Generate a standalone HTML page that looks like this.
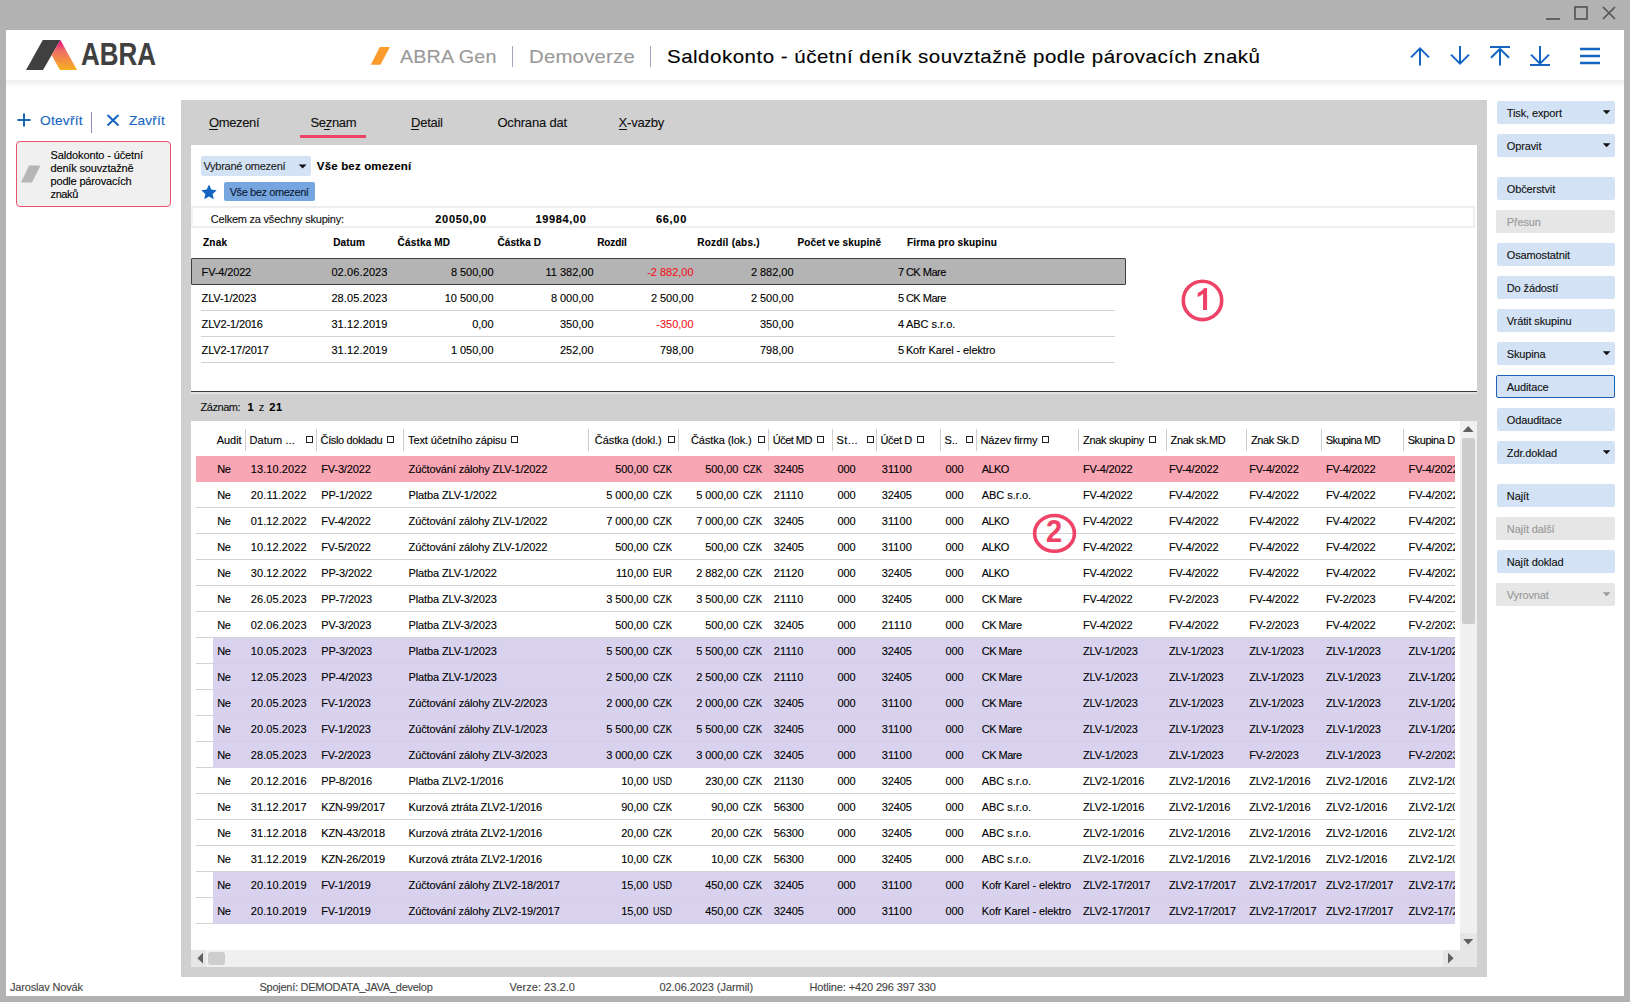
<!DOCTYPE html>
<html lang="cs"><head><meta charset="utf-8"><title>Saldokonto</title>
<style>
html,body{margin:0;padding:0}
body{width:1630px;height:1002px;overflow:hidden;background:#b2b2b2;font-family:'Liberation Sans',sans-serif;position:relative;color:#000}
#r{position:absolute;left:0;top:0;width:1630px;height:1002px;overflow:hidden}
#r div{position:absolute}
#r svg{position:absolute;overflow:visible}
.t{-webkit-text-stroke:0.12px currentColor;position:absolute;white-space:pre;font-family:'Liberation Sans',sans-serif}
.b{font-weight:700}
.s10{font-size:10px;line-height:13px}
.s11{font-size:11px;line-height:14px}
.s11_5{font-size:11.5px;line-height:15px}
.s13{font-size:13px;line-height:17px}
.s19{font-size:19px;line-height:25px}
.s31{font-size:31px;line-height:40px}
</style></head><body><div id="r">
<div style="left:6px;top:30px;width:1618px;height:966px;background:#fff;"></div>
<div style="left:6px;top:80px;width:1618px;height:8px;background:linear-gradient(#efefef,#fff);"></div>
<svg style="left:1540px;top:0" width="84" height="30"><g stroke="#555" stroke-width="1.7" fill="none"><path d="M6 19H20"/><rect x="35" y="7" width="12" height="12"/><path d="M63 7L75 19M75 7L63 19"/></g></svg>
<svg style="left:20px;top:36px" width="70" height="40"><defs><linearGradient id="lg" x1="0" y1="0" x2="0" y2="1"><stop offset="0" stop-color="#e6007e"/><stop offset="0.35" stop-color="#ee6d66"/><stop offset="1" stop-color="#f7b01f"/></linearGradient></defs><path d="M6 34L22.8 4H40.4L23 34Z" fill="#404040"/><path d="M40.4 4L57 34H40L31.6 19Z" fill="url(#lg)"/></svg>
<svg style="left:370px;top:46px" width="22" height="20"><path d="M0.8 18.8L9.8 1H19.9L10.4 18.8Z" fill="#fb9b2b"/></svg>
<div style="left:512px;top:46px;width:1px;height:21px;background:#a3a3c2;"></div>
<div style="left:650px;top:46px;width:1px;height:21px;background:#a3a3c2;"></div>
<svg style="left:1405px;top:40px" width="205" height="32"><g stroke="#1565c0" stroke-width="2" fill="none"><path d="M15 25.5V8.5M6 17.4L15 8.4L24 17.4"/><path d="M55 6V23M46 14.6L55 23.6L64 14.6"/><path d="M85 7H105M95 25.5V9M86 17.8L95 8.8L104 17.8"/><path d="M125 25H145M135 6V23M126 14.6L135 23.6L144 14.6"/><path d="M175 9H195M175 16H195M175 23H195" stroke-width="2.6"/></g></svg>
<svg style="left:16px;top:112px" width="110" height="22"><g stroke="#1565c0" stroke-width="2" fill="none"><path d="M8 1.5V14.5M1.5 8H14.5"/><path d="M91.5 3L102.5 13.5M102.5 3L91.5 13.5"/></g><path d="M75.5 0V21" stroke="#8d8dc0" stroke-width="1"/></svg>
<div style="left:16px;top:141px;width:153px;height:64px;background:#f0f0f0;border:1px solid #e9536f;border-radius:4px"></div>
<svg style="left:21px;top:165px" width="20" height="18"><path d="M0 17.5L8 0.5H19.5L11 17.5Z" fill="#b6b6b6"/></svg>
<div style="left:181px;top:100px;width:1306px;height:877px;background:#d0d0d0;"></div>
<div style="left:209px;top:128.5px;width:9px;height:1px;background:#111;"></div>
<div style="left:324px;top:128.5px;width:6px;height:1px;background:#111;"></div>
<div style="left:411px;top:128.5px;width:8px;height:1px;background:#111;"></div>
<div style="left:619px;top:128.5px;width:8px;height:1px;background:#111;"></div>
<div style="left:300px;top:135px;width:66px;height:3px;background:#ee4266;"></div>
<div style="left:191px;top:145px;width:1286px;height:246px;background:#fff;"></div>
<div style="left:191px;top:391px;width:1286px;height:1px;background:#3c3c3c;"></div>
<div style="left:191px;top:392px;width:1286px;height:2px;background:#e2e2e2;"></div>
<div style="left:191px;top:421px;width:1286px;height:546px;background:#fff;"></div>
<div style="left:1497px;top:101px;width:118px;height:23px;background:#d3e3f5;border-radius:2px"></div>
<svg style="left:1602px;top:110px" width="10" height="6"><path d="M0.8 0.3H8.4L4.6 4.3Z" fill="#111"/></svg>
<div style="left:1497px;top:134px;width:118px;height:23px;background:#d3e3f5;border-radius:2px"></div>
<svg style="left:1602px;top:143px" width="10" height="6"><path d="M0.8 0.3H8.4L4.6 4.3Z" fill="#111"/></svg>
<div style="left:1497px;top:177px;width:118px;height:23px;background:#d3e3f5;border-radius:2px"></div>
<div style="left:1496px;top:210px;width:119px;height:23px;background:#e6e6e6;border-radius:2px"></div>
<div style="left:1497px;top:243px;width:118px;height:23px;background:#d3e3f5;border-radius:2px"></div>
<div style="left:1497px;top:276px;width:118px;height:23px;background:#d3e3f5;border-radius:2px"></div>
<div style="left:1497px;top:309px;width:118px;height:23px;background:#d3e3f5;border-radius:2px"></div>
<div style="left:1497px;top:342px;width:118px;height:23px;background:#d3e3f5;border-radius:2px"></div>
<svg style="left:1602px;top:351px" width="10" height="6"><path d="M0.8 0.3H8.4L4.6 4.3Z" fill="#111"/></svg>
<div style="left:1496px;top:375px;width:117px;height:21px;background:#d3e3f5;border:1px solid #1e62b8;border-radius:2px"></div>
<div style="left:1497px;top:408px;width:118px;height:23px;background:#d3e3f5;border-radius:2px"></div>
<div style="left:1497px;top:441px;width:118px;height:23px;background:#d3e3f5;border-radius:2px"></div>
<svg style="left:1602px;top:450px" width="10" height="6"><path d="M0.8 0.3H8.4L4.6 4.3Z" fill="#111"/></svg>
<div style="left:1497px;top:484px;width:118px;height:23px;background:#d3e3f5;border-radius:2px"></div>
<div style="left:1496px;top:517px;width:119px;height:23px;background:#e6e6e6;border-radius:2px"></div>
<div style="left:1497px;top:550px;width:118px;height:23px;background:#d3e3f5;border-radius:2px"></div>
<div style="left:1496px;top:583px;width:119px;height:23px;background:#e6e6e6;border-radius:2px"></div>
<svg style="left:1602px;top:592px" width="10" height="6"><path d="M0.8 0.3H8.4L4.6 4.3Z" fill="#999"/></svg>
<div style="left:201px;top:156px;width:110px;height:20px;background:#d3e3f5;border-radius:2px"></div>
<svg style="left:298px;top:164px" width="10" height="6"><path d="M0.6 0.4H8.6L4.6 4.4Z" fill="#111"/></svg>
<svg style="left:201px;top:184px" width="16" height="16"><path d="M8 0.6L10.3 5.6L15.7 6.2L11.7 9.9L12.8 15.3L8 12.6L3.2 15.3L4.3 9.9L0.3 6.2L5.7 5.6Z" fill="#1565c0"/></svg>
<div style="left:224px;top:182px;width:91px;height:19px;background:#76a5df;border-radius:2px"></div>
<div style="left:191px;top:206px;width:1280px;height:18px;background:#fff;border:2px solid #efeeee;border-left-color:#f4f3f3"></div>
<div style="left:191px;top:258px;width:933px;height:25px;background:#b4b4b4;border:1px solid #404040;border-radius:1px"></div>
<div style="left:201px;top:310px;width:914px;height:1px;background:#d2d2d2;"></div>
<div style="left:201px;top:336px;width:914px;height:1px;background:#d2d2d2;"></div>
<div style="left:201px;top:362px;width:914px;height:1px;background:#d2d2d2;"></div>
<div style="left:306px;top:436px;width:5px;height:5px;background:transparent;border:1px solid #222"></div>
<div style="left:387px;top:436px;width:5px;height:5px;background:transparent;border:1px solid #222"></div>
<div style="left:511px;top:436px;width:5px;height:5px;background:transparent;border:1px solid #222"></div>
<div style="left:668px;top:436px;width:5px;height:5px;background:transparent;border:1px solid #222"></div>
<div style="left:758px;top:436px;width:5px;height:5px;background:transparent;border:1px solid #222"></div>
<div style="left:817.4px;top:436px;width:5px;height:5px;background:transparent;border:1px solid #222"></div>
<div style="left:866.5px;top:436px;width:5px;height:5px;background:transparent;border:1px solid #222"></div>
<div style="left:917px;top:436px;width:5px;height:5px;background:transparent;border:1px solid #222"></div>
<div style="left:966.2px;top:436px;width:5px;height:5px;background:transparent;border:1px solid #222"></div>
<div style="left:1042.3px;top:436px;width:5px;height:5px;background:transparent;border:1px solid #222"></div>
<div style="left:1149.3px;top:436px;width:5px;height:5px;background:transparent;border:1px solid #222"></div>
<div style="left:245px;top:429px;width:1px;height:22px;background:#cfcfcf;"></div>
<div style="left:316px;top:429px;width:1px;height:22px;background:#cfcfcf;"></div>
<div style="left:403px;top:429px;width:1px;height:22px;background:#cfcfcf;"></div>
<div style="left:588px;top:429px;width:1px;height:22px;background:#cfcfcf;"></div>
<div style="left:678px;top:429px;width:1px;height:22px;background:#cfcfcf;"></div>
<div style="left:768px;top:429px;width:1px;height:22px;background:#cfcfcf;"></div>
<div style="left:832px;top:429px;width:1px;height:22px;background:#cfcfcf;"></div>
<div style="left:876px;top:429px;width:1px;height:22px;background:#cfcfcf;"></div>
<div style="left:940px;top:429px;width:1px;height:22px;background:#cfcfcf;"></div>
<div style="left:976px;top:429px;width:1px;height:22px;background:#cfcfcf;"></div>
<div style="left:1078px;top:429px;width:1px;height:22px;background:#cfcfcf;"></div>
<div style="left:1166px;top:429px;width:1px;height:22px;background:#cfcfcf;"></div>
<div style="left:1246px;top:429px;width:1px;height:22px;background:#cfcfcf;"></div>
<div style="left:1321px;top:429px;width:1px;height:22px;background:#cfcfcf;"></div>
<div style="left:1403px;top:429px;width:1px;height:22px;background:#cfcfcf;"></div>
<div style="left:196px;top:455px;width:1259px;height:470px;overflow:hidden" id="g">
<div style="left:0;top:1px;width:1259px;height:26px;background:#f8a5b4"></div>
<div style="left:0;top:52px;width:1259px;height:1px;background:#d2d2d2"></div>
<div style="left:0;top:78px;width:1259px;height:1px;background:#d2d2d2"></div>
<div style="left:0;top:104px;width:1259px;height:1px;background:#d2d2d2"></div>
<div style="left:0;top:130px;width:1259px;height:1px;background:#d2d2d2"></div>
<div style="left:0;top:156px;width:1259px;height:1px;background:#d2d2d2"></div>
<div style="left:0;top:182px;width:1259px;height:1px;background:#d2d2d2"></div>
<div style="left:0;top:208px;width:17px;height:1px;background:#d2d2d2"></div>
<div style="left:17px;top:183px;width:1242px;height:26px;background:#d9d2ee"></div>
<div style="left:17px;top:208px;width:1242px;height:1px;background:#d4cfe2"></div>
<div style="left:0;top:234px;width:17px;height:1px;background:#d2d2d2"></div>
<div style="left:17px;top:209px;width:1242px;height:26px;background:#d9d2ee"></div>
<div style="left:17px;top:234px;width:1242px;height:1px;background:#d4cfe2"></div>
<div style="left:0;top:260px;width:17px;height:1px;background:#d2d2d2"></div>
<div style="left:17px;top:235px;width:1242px;height:26px;background:#d9d2ee"></div>
<div style="left:17px;top:260px;width:1242px;height:1px;background:#d4cfe2"></div>
<div style="left:0;top:286px;width:17px;height:1px;background:#d2d2d2"></div>
<div style="left:17px;top:261px;width:1242px;height:26px;background:#d9d2ee"></div>
<div style="left:17px;top:286px;width:1242px;height:1px;background:#d4cfe2"></div>
<div style="left:0;top:312px;width:17px;height:1px;background:#d2d2d2"></div>
<div style="left:17px;top:287px;width:1242px;height:26px;background:#d9d2ee"></div>
<div style="left:0;top:338px;width:1259px;height:1px;background:#d2d2d2"></div>
<div style="left:0;top:364px;width:1259px;height:1px;background:#d2d2d2"></div>
<div style="left:0;top:390px;width:1259px;height:1px;background:#d2d2d2"></div>
<div style="left:0;top:416px;width:1259px;height:1px;background:#d2d2d2"></div>
<div style="left:0;top:442px;width:17px;height:1px;background:#d2d2d2"></div>
<div style="left:17px;top:417px;width:1242px;height:26px;background:#d9d2ee"></div>
<div style="left:17px;top:442px;width:1242px;height:1px;background:#d4cfe2"></div>
<div style="left:0;top:468px;width:17px;height:1px;background:#d2d2d2"></div>
<div style="left:17px;top:443px;width:1242px;height:26px;background:#d9d2ee"></div>
</div>
<div style="left:1460px;top:421px;width:17px;height:529px;background:#f0f0f0;"></div>
<svg style="left:1462px;top:425px" width="14" height="8"><path d="M0.8 7L6.2 1L11.6 7Z" fill="#606060"/></svg>
<div style="left:1462px;top:438px;width:13px;height:186px;background:#cdcdcd;border-radius:2px"></div>
<div style="left:1460px;top:933px;width:17px;height:17px;background:#e6e6e6;"></div>
<svg style="left:1462px;top:938px" width="14" height="8"><path d="M1.2 1L6.2 6.6L11.2 1Z" fill="#606060"/></svg>
<div style="left:191px;top:950px;width:1269px;height:17px;background:#f0f0f0;"></div>
<div style="left:1460px;top:950px;width:17px;height:17px;background:#e6e6e6;"></div>
<div style="left:1443px;top:950px;width:17px;height:17px;background:#e6e6e6;"></div>
<div style="left:191px;top:950px;width:15px;height:17px;background:#e6e6e6;"></div>
<svg style="left:196px;top:952px" width="8" height="12"><path d="M7 0.8L1.4 6.2L7 11.6Z" fill="#606060"/></svg>
<svg style="left:1447px;top:952px" width="8" height="12"><path d="M1 0.8L6.6 6.2L1 11.6Z" fill="#606060"/></svg>
<div style="left:208px;top:952px;width:17px;height:13px;background:#cdcdcd;border-radius:3px"></div>
<span class="t s31 b" style="left:81px;top:35.16px;color:#404040;;transform:scaleX(0.8374);transform-origin:0 0">ABRA</span>
<span class="t s19" style="left:400.4px;top:43.82px;letter-spacing:0.112px;color:#999;;transform:scaleX(1.0400);transform-origin:0 0">ABRA Gen</span>
<span class="t s19" style="left:528.8px;top:43.82px;letter-spacing:0.212px;color:#999;;transform:scaleX(1.0700);transform-origin:0 0">Demoverze</span>
<span class="t s19" style="left:666.8px;top:43.82px;letter-spacing:0.452px;color:#000;;transform:scaleX(1.0800);transform-origin:0 0">Saldokonto - účetní deník souvztažně podle párovacích znaků</span>
<span class="t s13" style="left:39.5px;top:111.8px;letter-spacing:0.195px;color:#1565c0;;transform:scaleX(1.0600);transform-origin:0 0">Otevřít</span>
<span class="t s13" style="left:128.6px;top:111.8px;letter-spacing:0.175px;color:#1565c0;;transform:scaleX(1.0500);transform-origin:0 0">Zavřít</span>
<span class="t s11" style="left:50.5px;top:147.99px;letter-spacing:-0.121px">Saldokonto - účetní</span>
<span class="t s11" style="left:50.5px;top:160.89px;letter-spacing:-0.164px">deník souvztažně</span>
<span class="t s11" style="left:50.5px;top:173.79px;letter-spacing:-0.174px">podle párovacích</span>
<span class="t s11" style="left:50.5px;top:186.69px;letter-spacing:-0.372px">znaků</span>
<span class="t s13" style="left:208.9px;top:114.0px;letter-spacing:-0.336px;color:#111">Omezení</span>
<span class="t s13" style="left:310.5px;top:114.0px;letter-spacing:-0.334px;color:#111">Seznam</span>
<span class="t s13" style="left:411.1px;top:114.0px;letter-spacing:-0.275px;color:#111">Detail</span>
<span class="t s13" style="left:497.4px;top:114.0px;letter-spacing:-0.177px;color:#111">Ochrana dat</span>
<span class="t s13" style="left:618.6px;top:114.0px;letter-spacing:-0.224px;color:#111">X-vazby</span>
<span class="t s11" style="left:1506.8px;top:105.99px;letter-spacing:-0.118px;color:#111">Tisk, export</span>
<span class="t s11" style="left:1506.8px;top:138.99px;letter-spacing:-0.127px;color:#111">Opravit</span>
<span class="t s11" style="left:1506.8px;top:181.99px;letter-spacing:-0.124px;color:#111">Občerstvit</span>
<span class="t s11" style="left:1506.8px;top:214.99px;letter-spacing:-0.145px;color:#999">Přesun</span>
<span class="t s11" style="left:1506.8px;top:247.99px;letter-spacing:-0.135px;color:#111">Osamostatnit</span>
<span class="t s11" style="left:1506.8px;top:280.99px;letter-spacing:-0.131px;color:#111">Do žádostí</span>
<span class="t s11" style="left:1506.8px;top:313.99px;letter-spacing:-0.118px;color:#111">Vrátit skupinu</span>
<span class="t s11" style="left:1506.8px;top:346.99px;letter-spacing:-0.142px;color:#111">Skupina</span>
<span class="t s11" style="left:1506.8px;top:379.99px;letter-spacing:-0.134px;color:#111">Auditace</span>
<span class="t s11" style="left:1506.8px;top:412.99px;letter-spacing:-0.141px;color:#111">Odauditace</span>
<span class="t s11" style="left:1506.8px;top:445.99px;letter-spacing:-0.128px;color:#111">Zdr.doklad</span>
<span class="t s11" style="left:1506.8px;top:488.99px;letter-spacing:-0.113px;color:#111">Najít</span>
<span class="t s11" style="left:1506.8px;top:521.99px;letter-spacing:-0.111px;color:#999">Najít další</span>
<span class="t s11" style="left:1506.8px;top:554.99px;letter-spacing:-0.121px;color:#111">Najít doklad</span>
<span class="t s11" style="left:1506.8px;top:587.99px;letter-spacing:-0.134px;color:#999">Vyrovnat</span>
<span class="t s11" style="left:10px;top:979.89px;letter-spacing:-0.172px;color:#444">Jaroslav Novák</span>
<span class="t s11" style="left:259.5px;top:979.89px;letter-spacing:-0.259px;color:#444">Spojení: DEMODATA_JAVA_develop</span>
<span class="t s11" style="left:509.5px;top:979.89px;letter-spacing:0.052px;color:#444">Verze: 23.2.0</span>
<span class="t s11" style="left:659.5px;top:979.89px;letter-spacing:-0.067px;color:#444">02.06.2023 (Jarmil)</span>
<span class="t s11" style="left:809.5px;top:979.89px;letter-spacing:-0.129px;color:#444">Hotline: +420 296 397 330</span>
<span class="t s11" style="left:203.4px;top:159.19px;letter-spacing:-0.254px;color:#222">Vybrané omezení</span>
<span class="t s11_5 b" style="left:316.8px;top:158.52px;letter-spacing:0.17px">Vše bez omezení</span>
<span class="t s11" style="left:229.7px;top:184.99px;letter-spacing:-0.413px;color:#0b1a33">Vše bez omezení</span>
<span class="t s11" style="left:210.8px;top:211.99px;letter-spacing:-0.222px;color:#111">Celkem za všechny skupiny:</span>
<span class="t s11 b" style="left:435.3px;top:211.99px;letter-spacing:0.689px">20050,00</span>
<span class="t s11 b" style="left:535.4px;top:211.99px;letter-spacing:0.664px">19984,00</span>
<span class="t s11 b" style="left:656px;top:211.99px;letter-spacing:0.694px">66,00</span>
<span class="t s10 b" style="left:202.9px;top:236.34px;letter-spacing:0.289px">Znak</span>
<span class="t s10 b" style="left:333.2px;top:236.34px;letter-spacing:0.135px">Datum</span>
<span class="t s10 b" style="left:397.6px;top:236.34px;letter-spacing:0.162px">Částka MD</span>
<span class="t s10 b" style="left:497.4px;top:236.34px;letter-spacing:0.123px">Částka D</span>
<span class="t s10 b" style="left:597.2px;top:236.34px;letter-spacing:-0.1px">Rozdíl</span>
<span class="t s10 b" style="left:697.2px;top:236.34px;letter-spacing:0.242px">Rozdíl (abs.)</span>
<span class="t s10 b" style="left:797.5px;top:236.34px;letter-spacing:0.131px">Počet ve skupině</span>
<span class="t s10 b" style="left:907.1px;top:236.34px;letter-spacing:0.163px">Firma pro skupinu</span>
<span class="t s11" style="left:201.6px;top:264.99px;letter-spacing:-0.141px">FV-4/2022</span>
<span class="t s11" style="left:331.4px;top:264.99px;letter-spacing:0.114px">02.06.2023</span>
<span class="t s11" style="right:1136.53px;top:264.99px;letter-spacing:-0.027px">8 500,00</span>
<span class="t s11" style="right:1036.53px;top:264.99px;letter-spacing:-0.027px">11 382,00</span>
<span class="t s11" style="right:936.53px;top:264.99px;letter-spacing:-0.026px;color:#f0141e">-2 882,00</span>
<span class="t s11" style="right:836.53px;top:264.99px;letter-spacing:-0.027px">2 882,00</span>
<span class="t s11" style="right:725.95px;top:264.99px;letter-spacing:-0.153px">7</span>
<span class="t s11" style="left:905.9px;top:264.99px;letter-spacing:-0.501px">CK Mare</span>
<span class="t s11" style="left:201.6px;top:290.99px;letter-spacing:-0.14px">ZLV-1/2023</span>
<span class="t s11" style="left:331.4px;top:290.99px;letter-spacing:0.114px">28.05.2023</span>
<span class="t s11" style="right:1136.53px;top:290.99px;letter-spacing:-0.027px">10 500,00</span>
<span class="t s11" style="right:1036.53px;top:290.99px;letter-spacing:-0.027px">8 000,00</span>
<span class="t s11" style="right:936.53px;top:290.99px;letter-spacing:-0.027px">2 500,00</span>
<span class="t s11" style="right:836.53px;top:290.99px;letter-spacing:-0.027px">2 500,00</span>
<span class="t s11" style="right:725.95px;top:290.99px;letter-spacing:-0.153px">5</span>
<span class="t s11" style="left:905.9px;top:290.99px;letter-spacing:-0.501px">CK Mare</span>
<span class="t s11" style="left:201.6px;top:316.99px;letter-spacing:-0.143px">ZLV2-1/2016</span>
<span class="t s11" style="left:331.4px;top:316.99px;letter-spacing:0.114px">31.12.2019</span>
<span class="t s11" style="right:1136.53px;top:316.99px;letter-spacing:-0.027px">0,00</span>
<span class="t s11" style="right:1036.53px;top:316.99px;letter-spacing:-0.028px">350,00</span>
<span class="t s11" style="right:936.53px;top:316.99px;letter-spacing:-0.027px;color:#f0141e">-350,00</span>
<span class="t s11" style="right:836.53px;top:316.99px;letter-spacing:-0.028px">350,00</span>
<span class="t s11" style="right:725.95px;top:316.99px;letter-spacing:-0.153px">4</span>
<span class="t s11" style="left:905.9px;top:316.99px;letter-spacing:-0.013px">ABC s.r.o.</span>
<span class="t s11" style="left:201.6px;top:342.99px;letter-spacing:-0.144px">ZLV2-17/2017</span>
<span class="t s11" style="left:331.4px;top:342.99px;letter-spacing:0.114px">31.12.2019</span>
<span class="t s11" style="right:1136.53px;top:342.99px;letter-spacing:-0.027px">1 050,00</span>
<span class="t s11" style="right:1036.53px;top:342.99px;letter-spacing:-0.028px">252,00</span>
<span class="t s11" style="right:936.53px;top:342.99px;letter-spacing:-0.028px">798,00</span>
<span class="t s11" style="right:836.53px;top:342.99px;letter-spacing:-0.028px">798,00</span>
<span class="t s11" style="right:725.95px;top:342.99px;letter-spacing:-0.153px">5</span>
<span class="t s11" style="left:905.9px;top:342.99px;letter-spacing:-0.115px">Kofr Karel - elektro</span>
<span class="t s11" style="left:200.6px;top:399.89px;letter-spacing:-0.471px;color:#111">Záznam:</span>
<span class="t s11 b" style="left:247.6px;top:399.89px;letter-spacing:0.613px">1</span>
<span class="t s11" style="left:258.8px;top:399.89px;letter-spacing:-0.138px;color:#111">z</span>
<span class="t s11 b" style="left:269.3px;top:399.89px;letter-spacing:0.475px">21</span>
<span class="t s11" style="left:216.8px;top:432.89px;letter-spacing:-0.076px;color:#000">Audit</span>
<span class="t s11" style="left:249.4px;top:432.89px;letter-spacing:0.097px;color:#000">Datum ...</span>
<span class="t s11" style="left:320.6px;top:432.89px;letter-spacing:-0.381px;color:#000">Číslo dokladu</span>
<span class="t s11" style="left:408px;top:432.89px;letter-spacing:-0.09px;color:#000">Text účetního zápisu</span>
<span class="t s11" style="left:594.8px;top:432.89px;letter-spacing:-0.076px;color:#000">Částka (dokl.)</span>
<span class="t s11" style="left:691px;top:432.89px;letter-spacing:-0.081px;color:#000">Částka (lok.)</span>
<span class="t s11" style="left:772.8px;top:432.89px;letter-spacing:-0.54px;color:#000">Účet MD</span>
<span class="t s11" style="left:836.6px;top:432.89px;letter-spacing:0.367px;color:#000">St...</span>
<span class="t s11" style="left:880.6px;top:432.89px;letter-spacing:-0.421px;color:#000">Účet D</span>
<span class="t s11" style="left:944.4px;top:432.89px;letter-spacing:0.016px;color:#000">S..</span>
<span class="t s11" style="left:980.4px;top:432.89px;letter-spacing:-0.097px;color:#000">Název firmy</span>
<span class="t s11" style="left:1083px;top:432.89px;letter-spacing:-0.318px;color:#000">Znak skupiny</span>
<span class="t s11" style="left:1170.6px;top:432.89px;letter-spacing:-0.399px;color:#000">Znak sk.MD</span>
<span class="t s11" style="left:1250.9px;top:432.89px;letter-spacing:-0.395px;color:#000">Znak Sk.D</span>
<span class="t s11" style="left:1325.7px;top:432.89px;letter-spacing:-0.542px;color:#000">Skupina MD</span>
<span class="t s11" style="left:217.2px;top:461.89px;letter-spacing:-0.431px">Ne</span>
<span class="t s11" style="left:250.8px;top:461.89px;letter-spacing:0.074px">13.10.2022</span>
<span class="t s11" style="left:321.2px;top:461.89px;letter-spacing:-0.141px">FV-3/2022</span>
<span class="t s11" style="left:408.6px;top:461.89px;letter-spacing:-0.132px">Zúčtování zálohy ZLV-1/2022</span>
<span class="t s11" style="left:652.5px;top:461.89px;;transform:scaleX(0.8636);transform-origin:0 0">CZK</span>
<span class="t s11" style="right:981.81px;top:461.89px;letter-spacing:-0.112px">500,00</span>
<span class="t s11" style="left:742.5px;top:461.89px;;transform:scaleX(0.8636);transform-origin:0 0">CZK</span>
<span class="t s11" style="right:891.81px;top:461.89px;letter-spacing:-0.112px">500,00</span>
<span class="t s11" style="left:773.7px;top:461.89px;letter-spacing:-0.119px">32405</span>
<span class="t s11" style="left:837.6px;top:461.89px;letter-spacing:-0.12px">000</span>
<span class="t s11" style="left:881.8px;top:461.89px;letter-spacing:0.044px">31100</span>
<span class="t s11" style="left:945.6px;top:461.89px;letter-spacing:-0.12px">000</span>
<span class="t s11" style="left:981.7px;top:461.89px;letter-spacing:-0.54px">ALKO</span>
<span class="t s11" style="left:1083px;top:461.89px;letter-spacing:-0.141px">FV-4/2022</span>
<span class="t s11" style="left:1168.9px;top:461.89px;letter-spacing:-0.141px">FV-4/2022</span>
<span class="t s11" style="left:1249.2px;top:461.89px;letter-spacing:-0.141px">FV-4/2022</span>
<span class="t s11" style="left:1326px;top:461.89px;letter-spacing:-0.141px">FV-4/2022</span>
<span class="t s11" style="left:217.2px;top:487.89px;letter-spacing:-0.431px">Ne</span>
<span class="t s11" style="left:250.8px;top:487.89px;letter-spacing:0.155px">20.11.2022</span>
<span class="t s11" style="left:321.2px;top:487.89px;letter-spacing:-0.144px">PP-1/2022</span>
<span class="t s11" style="left:408.6px;top:487.89px;letter-spacing:-0.133px">Platba ZLV-1/2022</span>
<span class="t s11" style="left:652.5px;top:487.89px;;transform:scaleX(0.8636);transform-origin:0 0">CZK</span>
<span class="t s11" style="right:981.81px;top:487.89px;letter-spacing:-0.107px">5 000,00</span>
<span class="t s11" style="left:742.5px;top:487.89px;;transform:scaleX(0.8636);transform-origin:0 0">CZK</span>
<span class="t s11" style="right:891.81px;top:487.89px;letter-spacing:-0.107px">5 000,00</span>
<span class="t s11" style="left:773.7px;top:487.89px;letter-spacing:0.206px">21110</span>
<span class="t s11" style="left:837.6px;top:487.89px;letter-spacing:-0.12px">000</span>
<span class="t s11" style="left:881.8px;top:487.89px;letter-spacing:-0.119px">32405</span>
<span class="t s11" style="left:945.6px;top:487.89px;letter-spacing:-0.12px">000</span>
<span class="t s11" style="left:981.7px;top:487.89px;letter-spacing:-0.013px">ABC s.r.o.</span>
<span class="t s11" style="left:1083px;top:487.89px;letter-spacing:-0.141px">FV-4/2022</span>
<span class="t s11" style="left:1168.9px;top:487.89px;letter-spacing:-0.141px">FV-4/2022</span>
<span class="t s11" style="left:1249.2px;top:487.89px;letter-spacing:-0.141px">FV-4/2022</span>
<span class="t s11" style="left:1326px;top:487.89px;letter-spacing:-0.141px">FV-4/2022</span>
<span class="t s11" style="left:217.2px;top:513.89px;letter-spacing:-0.431px">Ne</span>
<span class="t s11" style="left:250.8px;top:513.89px;letter-spacing:0.074px">01.12.2022</span>
<span class="t s11" style="left:321.2px;top:513.89px;letter-spacing:-0.141px">FV-4/2022</span>
<span class="t s11" style="left:408.6px;top:513.89px;letter-spacing:-0.132px">Zúčtování zálohy ZLV-1/2022</span>
<span class="t s11" style="left:652.5px;top:513.89px;;transform:scaleX(0.8636);transform-origin:0 0">CZK</span>
<span class="t s11" style="right:981.81px;top:513.89px;letter-spacing:-0.107px">7 000,00</span>
<span class="t s11" style="left:742.5px;top:513.89px;;transform:scaleX(0.8636);transform-origin:0 0">CZK</span>
<span class="t s11" style="right:891.81px;top:513.89px;letter-spacing:-0.107px">7 000,00</span>
<span class="t s11" style="left:773.7px;top:513.89px;letter-spacing:-0.119px">32405</span>
<span class="t s11" style="left:837.6px;top:513.89px;letter-spacing:-0.12px">000</span>
<span class="t s11" style="left:881.8px;top:513.89px;letter-spacing:0.044px">31100</span>
<span class="t s11" style="left:945.6px;top:513.89px;letter-spacing:-0.12px">000</span>
<span class="t s11" style="left:981.7px;top:513.89px;letter-spacing:-0.54px">ALKO</span>
<span class="t s11" style="left:1083px;top:513.89px;letter-spacing:-0.141px">FV-4/2022</span>
<span class="t s11" style="left:1168.9px;top:513.89px;letter-spacing:-0.141px">FV-4/2022</span>
<span class="t s11" style="left:1249.2px;top:513.89px;letter-spacing:-0.141px">FV-4/2022</span>
<span class="t s11" style="left:1326px;top:513.89px;letter-spacing:-0.141px">FV-4/2022</span>
<span class="t s11" style="left:217.2px;top:539.89px;letter-spacing:-0.431px">Ne</span>
<span class="t s11" style="left:250.8px;top:539.89px;letter-spacing:0.074px">10.12.2022</span>
<span class="t s11" style="left:321.2px;top:539.89px;letter-spacing:-0.141px">FV-5/2022</span>
<span class="t s11" style="left:408.6px;top:539.89px;letter-spacing:-0.132px">Zúčtování zálohy ZLV-1/2022</span>
<span class="t s11" style="left:652.5px;top:539.89px;;transform:scaleX(0.8636);transform-origin:0 0">CZK</span>
<span class="t s11" style="right:981.81px;top:539.89px;letter-spacing:-0.112px">500,00</span>
<span class="t s11" style="left:742.5px;top:539.89px;;transform:scaleX(0.8636);transform-origin:0 0">CZK</span>
<span class="t s11" style="right:891.81px;top:539.89px;letter-spacing:-0.112px">500,00</span>
<span class="t s11" style="left:773.7px;top:539.89px;letter-spacing:-0.119px">32405</span>
<span class="t s11" style="left:837.6px;top:539.89px;letter-spacing:-0.12px">000</span>
<span class="t s11" style="left:881.8px;top:539.89px;letter-spacing:0.044px">31100</span>
<span class="t s11" style="left:945.6px;top:539.89px;letter-spacing:-0.12px">000</span>
<span class="t s11" style="left:981.7px;top:539.89px;letter-spacing:-0.54px">ALKO</span>
<span class="t s11" style="left:1083px;top:539.89px;letter-spacing:-0.141px">FV-4/2022</span>
<span class="t s11" style="left:1168.9px;top:539.89px;letter-spacing:-0.141px">FV-4/2022</span>
<span class="t s11" style="left:1249.2px;top:539.89px;letter-spacing:-0.141px">FV-4/2022</span>
<span class="t s11" style="left:1326px;top:539.89px;letter-spacing:-0.141px">FV-4/2022</span>
<span class="t s11" style="left:217.2px;top:565.89px;letter-spacing:-0.431px">Ne</span>
<span class="t s11" style="left:250.8px;top:565.89px;letter-spacing:0.074px">30.12.2022</span>
<span class="t s11" style="left:321.2px;top:565.89px;letter-spacing:-0.144px">PP-3/2022</span>
<span class="t s11" style="left:408.6px;top:565.89px;letter-spacing:-0.133px">Platba ZLV-1/2022</span>
<span class="t s11" style="left:652.5px;top:565.89px;;transform:scaleX(0.8178);transform-origin:0 0">EUR</span>
<span class="t s11" style="right:981.81px;top:565.89px;letter-spacing:-0.109px">110,00</span>
<span class="t s11" style="left:742.5px;top:565.89px;;transform:scaleX(0.8636);transform-origin:0 0">CZK</span>
<span class="t s11" style="right:891.81px;top:565.89px;letter-spacing:-0.107px">2 882,00</span>
<span class="t s11" style="left:773.7px;top:565.89px;letter-spacing:0.044px">21120</span>
<span class="t s11" style="left:837.6px;top:565.89px;letter-spacing:-0.12px">000</span>
<span class="t s11" style="left:881.8px;top:565.89px;letter-spacing:-0.119px">32405</span>
<span class="t s11" style="left:945.6px;top:565.89px;letter-spacing:-0.12px">000</span>
<span class="t s11" style="left:981.7px;top:565.89px;letter-spacing:-0.54px">ALKO</span>
<span class="t s11" style="left:1083px;top:565.89px;letter-spacing:-0.141px">FV-4/2022</span>
<span class="t s11" style="left:1168.9px;top:565.89px;letter-spacing:-0.141px">FV-4/2022</span>
<span class="t s11" style="left:1249.2px;top:565.89px;letter-spacing:-0.141px">FV-4/2022</span>
<span class="t s11" style="left:1326px;top:565.89px;letter-spacing:-0.141px">FV-4/2022</span>
<span class="t s11" style="left:217.2px;top:591.89px;letter-spacing:-0.431px">Ne</span>
<span class="t s11" style="left:250.8px;top:591.89px;letter-spacing:0.074px">26.05.2023</span>
<span class="t s11" style="left:321.2px;top:591.89px;letter-spacing:-0.144px">PP-7/2023</span>
<span class="t s11" style="left:408.6px;top:591.89px;letter-spacing:-0.133px">Platba ZLV-3/2023</span>
<span class="t s11" style="left:652.5px;top:591.89px;;transform:scaleX(0.8636);transform-origin:0 0">CZK</span>
<span class="t s11" style="right:981.81px;top:591.89px;letter-spacing:-0.107px">3 500,00</span>
<span class="t s11" style="left:742.5px;top:591.89px;;transform:scaleX(0.8636);transform-origin:0 0">CZK</span>
<span class="t s11" style="right:891.81px;top:591.89px;letter-spacing:-0.107px">3 500,00</span>
<span class="t s11" style="left:773.7px;top:591.89px;letter-spacing:0.206px">21110</span>
<span class="t s11" style="left:837.6px;top:591.89px;letter-spacing:-0.12px">000</span>
<span class="t s11" style="left:881.8px;top:591.89px;letter-spacing:-0.119px">32405</span>
<span class="t s11" style="left:945.6px;top:591.89px;letter-spacing:-0.12px">000</span>
<span class="t s11" style="left:981.7px;top:591.89px;letter-spacing:-0.501px">CK Mare</span>
<span class="t s11" style="left:1083px;top:591.89px;letter-spacing:-0.141px">FV-4/2022</span>
<span class="t s11" style="left:1168.9px;top:591.89px;letter-spacing:-0.141px">FV-2/2023</span>
<span class="t s11" style="left:1249.2px;top:591.89px;letter-spacing:-0.141px">FV-4/2022</span>
<span class="t s11" style="left:1326px;top:591.89px;letter-spacing:-0.141px">FV-2/2023</span>
<span class="t s11" style="left:217.2px;top:617.89px;letter-spacing:-0.431px">Ne</span>
<span class="t s11" style="left:250.8px;top:617.89px;letter-spacing:0.074px">02.06.2023</span>
<span class="t s11" style="left:321.2px;top:617.89px;letter-spacing:-0.143px">PV-3/2023</span>
<span class="t s11" style="left:408.6px;top:617.89px;letter-spacing:-0.133px">Platba ZLV-3/2023</span>
<span class="t s11" style="left:652.5px;top:617.89px;;transform:scaleX(0.8636);transform-origin:0 0">CZK</span>
<span class="t s11" style="right:981.81px;top:617.89px;letter-spacing:-0.112px">500,00</span>
<span class="t s11" style="left:742.5px;top:617.89px;;transform:scaleX(0.8636);transform-origin:0 0">CZK</span>
<span class="t s11" style="right:891.81px;top:617.89px;letter-spacing:-0.112px">500,00</span>
<span class="t s11" style="left:773.7px;top:617.89px;letter-spacing:-0.119px">32405</span>
<span class="t s11" style="left:837.6px;top:617.89px;letter-spacing:-0.12px">000</span>
<span class="t s11" style="left:881.8px;top:617.89px;letter-spacing:0.206px">21110</span>
<span class="t s11" style="left:945.6px;top:617.89px;letter-spacing:-0.12px">000</span>
<span class="t s11" style="left:981.7px;top:617.89px;letter-spacing:-0.501px">CK Mare</span>
<span class="t s11" style="left:1083px;top:617.89px;letter-spacing:-0.141px">FV-4/2022</span>
<span class="t s11" style="left:1168.9px;top:617.89px;letter-spacing:-0.141px">FV-4/2022</span>
<span class="t s11" style="left:1249.2px;top:617.89px;letter-spacing:-0.141px">FV-2/2023</span>
<span class="t s11" style="left:1326px;top:617.89px;letter-spacing:-0.141px">FV-4/2022</span>
<span class="t s11" style="left:217.2px;top:643.89px;letter-spacing:-0.431px">Ne</span>
<span class="t s11" style="left:250.8px;top:643.89px;letter-spacing:0.074px">10.05.2023</span>
<span class="t s11" style="left:321.2px;top:643.89px;letter-spacing:-0.144px">PP-3/2023</span>
<span class="t s11" style="left:408.6px;top:643.89px;letter-spacing:-0.133px">Platba ZLV-1/2023</span>
<span class="t s11" style="left:652.5px;top:643.89px;;transform:scaleX(0.8636);transform-origin:0 0">CZK</span>
<span class="t s11" style="right:981.81px;top:643.89px;letter-spacing:-0.107px">5 500,00</span>
<span class="t s11" style="left:742.5px;top:643.89px;;transform:scaleX(0.8636);transform-origin:0 0">CZK</span>
<span class="t s11" style="right:891.81px;top:643.89px;letter-spacing:-0.107px">5 500,00</span>
<span class="t s11" style="left:773.7px;top:643.89px;letter-spacing:0.206px">21110</span>
<span class="t s11" style="left:837.6px;top:643.89px;letter-spacing:-0.12px">000</span>
<span class="t s11" style="left:881.8px;top:643.89px;letter-spacing:-0.119px">32405</span>
<span class="t s11" style="left:945.6px;top:643.89px;letter-spacing:-0.12px">000</span>
<span class="t s11" style="left:981.7px;top:643.89px;letter-spacing:-0.501px">CK Mare</span>
<span class="t s11" style="left:1083px;top:643.89px;letter-spacing:-0.14px">ZLV-1/2023</span>
<span class="t s11" style="left:1168.9px;top:643.89px;letter-spacing:-0.14px">ZLV-1/2023</span>
<span class="t s11" style="left:1249.2px;top:643.89px;letter-spacing:-0.14px">ZLV-1/2023</span>
<span class="t s11" style="left:1326px;top:643.89px;letter-spacing:-0.14px">ZLV-1/2023</span>
<span class="t s11" style="left:217.2px;top:669.89px;letter-spacing:-0.431px">Ne</span>
<span class="t s11" style="left:250.8px;top:669.89px;letter-spacing:0.074px">12.05.2023</span>
<span class="t s11" style="left:321.2px;top:669.89px;letter-spacing:-0.144px">PP-4/2023</span>
<span class="t s11" style="left:408.6px;top:669.89px;letter-spacing:-0.133px">Platba ZLV-1/2023</span>
<span class="t s11" style="left:652.5px;top:669.89px;;transform:scaleX(0.8636);transform-origin:0 0">CZK</span>
<span class="t s11" style="right:981.81px;top:669.89px;letter-spacing:-0.107px">2 500,00</span>
<span class="t s11" style="left:742.5px;top:669.89px;;transform:scaleX(0.8636);transform-origin:0 0">CZK</span>
<span class="t s11" style="right:891.81px;top:669.89px;letter-spacing:-0.107px">2 500,00</span>
<span class="t s11" style="left:773.7px;top:669.89px;letter-spacing:0.206px">21110</span>
<span class="t s11" style="left:837.6px;top:669.89px;letter-spacing:-0.12px">000</span>
<span class="t s11" style="left:881.8px;top:669.89px;letter-spacing:-0.119px">32405</span>
<span class="t s11" style="left:945.6px;top:669.89px;letter-spacing:-0.12px">000</span>
<span class="t s11" style="left:981.7px;top:669.89px;letter-spacing:-0.501px">CK Mare</span>
<span class="t s11" style="left:1083px;top:669.89px;letter-spacing:-0.14px">ZLV-1/2023</span>
<span class="t s11" style="left:1168.9px;top:669.89px;letter-spacing:-0.14px">ZLV-1/2023</span>
<span class="t s11" style="left:1249.2px;top:669.89px;letter-spacing:-0.14px">ZLV-1/2023</span>
<span class="t s11" style="left:1326px;top:669.89px;letter-spacing:-0.14px">ZLV-1/2023</span>
<span class="t s11" style="left:217.2px;top:695.89px;letter-spacing:-0.431px">Ne</span>
<span class="t s11" style="left:250.8px;top:695.89px;letter-spacing:0.074px">20.05.2023</span>
<span class="t s11" style="left:321.2px;top:695.89px;letter-spacing:-0.141px">FV-1/2023</span>
<span class="t s11" style="left:408.6px;top:695.89px;letter-spacing:-0.132px">Zúčtování zálohy ZLV-2/2023</span>
<span class="t s11" style="left:652.5px;top:695.89px;;transform:scaleX(0.8636);transform-origin:0 0">CZK</span>
<span class="t s11" style="right:981.81px;top:695.89px;letter-spacing:-0.107px">2 000,00</span>
<span class="t s11" style="left:742.5px;top:695.89px;;transform:scaleX(0.8636);transform-origin:0 0">CZK</span>
<span class="t s11" style="right:891.81px;top:695.89px;letter-spacing:-0.107px">2 000,00</span>
<span class="t s11" style="left:773.7px;top:695.89px;letter-spacing:-0.119px">32405</span>
<span class="t s11" style="left:837.6px;top:695.89px;letter-spacing:-0.12px">000</span>
<span class="t s11" style="left:881.8px;top:695.89px;letter-spacing:0.044px">31100</span>
<span class="t s11" style="left:945.6px;top:695.89px;letter-spacing:-0.12px">000</span>
<span class="t s11" style="left:981.7px;top:695.89px;letter-spacing:-0.501px">CK Mare</span>
<span class="t s11" style="left:1083px;top:695.89px;letter-spacing:-0.14px">ZLV-1/2023</span>
<span class="t s11" style="left:1168.9px;top:695.89px;letter-spacing:-0.14px">ZLV-1/2023</span>
<span class="t s11" style="left:1249.2px;top:695.89px;letter-spacing:-0.14px">ZLV-1/2023</span>
<span class="t s11" style="left:1326px;top:695.89px;letter-spacing:-0.14px">ZLV-1/2023</span>
<span class="t s11" style="left:217.2px;top:721.89px;letter-spacing:-0.431px">Ne</span>
<span class="t s11" style="left:250.8px;top:721.89px;letter-spacing:0.074px">20.05.2023</span>
<span class="t s11" style="left:321.2px;top:721.89px;letter-spacing:-0.141px">FV-1/2023</span>
<span class="t s11" style="left:408.6px;top:721.89px;letter-spacing:-0.132px">Zúčtování zálohy ZLV-1/2023</span>
<span class="t s11" style="left:652.5px;top:721.89px;;transform:scaleX(0.8636);transform-origin:0 0">CZK</span>
<span class="t s11" style="right:981.81px;top:721.89px;letter-spacing:-0.107px">5 500,00</span>
<span class="t s11" style="left:742.5px;top:721.89px;;transform:scaleX(0.8636);transform-origin:0 0">CZK</span>
<span class="t s11" style="right:891.81px;top:721.89px;letter-spacing:-0.107px">5 500,00</span>
<span class="t s11" style="left:773.7px;top:721.89px;letter-spacing:-0.119px">32405</span>
<span class="t s11" style="left:837.6px;top:721.89px;letter-spacing:-0.12px">000</span>
<span class="t s11" style="left:881.8px;top:721.89px;letter-spacing:0.044px">31100</span>
<span class="t s11" style="left:945.6px;top:721.89px;letter-spacing:-0.12px">000</span>
<span class="t s11" style="left:981.7px;top:721.89px;letter-spacing:-0.501px">CK Mare</span>
<span class="t s11" style="left:1083px;top:721.89px;letter-spacing:-0.14px">ZLV-1/2023</span>
<span class="t s11" style="left:1168.9px;top:721.89px;letter-spacing:-0.14px">ZLV-1/2023</span>
<span class="t s11" style="left:1249.2px;top:721.89px;letter-spacing:-0.14px">ZLV-1/2023</span>
<span class="t s11" style="left:1326px;top:721.89px;letter-spacing:-0.14px">ZLV-1/2023</span>
<span class="t s11" style="left:217.2px;top:747.89px;letter-spacing:-0.431px">Ne</span>
<span class="t s11" style="left:250.8px;top:747.89px;letter-spacing:0.074px">28.05.2023</span>
<span class="t s11" style="left:321.2px;top:747.89px;letter-spacing:-0.141px">FV-2/2023</span>
<span class="t s11" style="left:408.6px;top:747.89px;letter-spacing:-0.132px">Zúčtování zálohy ZLV-3/2023</span>
<span class="t s11" style="left:652.5px;top:747.89px;;transform:scaleX(0.8636);transform-origin:0 0">CZK</span>
<span class="t s11" style="right:981.81px;top:747.89px;letter-spacing:-0.107px">3 000,00</span>
<span class="t s11" style="left:742.5px;top:747.89px;;transform:scaleX(0.8636);transform-origin:0 0">CZK</span>
<span class="t s11" style="right:891.81px;top:747.89px;letter-spacing:-0.107px">3 000,00</span>
<span class="t s11" style="left:773.7px;top:747.89px;letter-spacing:-0.119px">32405</span>
<span class="t s11" style="left:837.6px;top:747.89px;letter-spacing:-0.12px">000</span>
<span class="t s11" style="left:881.8px;top:747.89px;letter-spacing:0.044px">31100</span>
<span class="t s11" style="left:945.6px;top:747.89px;letter-spacing:-0.12px">000</span>
<span class="t s11" style="left:981.7px;top:747.89px;letter-spacing:-0.501px">CK Mare</span>
<span class="t s11" style="left:1083px;top:747.89px;letter-spacing:-0.14px">ZLV-1/2023</span>
<span class="t s11" style="left:1168.9px;top:747.89px;letter-spacing:-0.14px">ZLV-1/2023</span>
<span class="t s11" style="left:1249.2px;top:747.89px;letter-spacing:-0.141px">FV-2/2023</span>
<span class="t s11" style="left:1326px;top:747.89px;letter-spacing:-0.14px">ZLV-1/2023</span>
<span class="t s11" style="left:217.2px;top:773.89px;letter-spacing:-0.431px">Ne</span>
<span class="t s11" style="left:250.8px;top:773.89px;letter-spacing:0.074px">20.12.2016</span>
<span class="t s11" style="left:321.2px;top:773.89px;letter-spacing:-0.144px">PP-8/2016</span>
<span class="t s11" style="left:408.6px;top:773.89px;letter-spacing:-0.135px">Platba ZLV2-1/2016</span>
<span class="t s11" style="left:652.5px;top:773.89px;;transform:scaleX(0.8178);transform-origin:0 0">USD</span>
<span class="t s11" style="right:981.81px;top:773.89px;letter-spacing:-0.11px">10,00</span>
<span class="t s11" style="left:742.5px;top:773.89px;;transform:scaleX(0.8636);transform-origin:0 0">CZK</span>
<span class="t s11" style="right:891.81px;top:773.89px;letter-spacing:-0.112px">230,00</span>
<span class="t s11" style="left:773.7px;top:773.89px;letter-spacing:0.044px">21130</span>
<span class="t s11" style="left:837.6px;top:773.89px;letter-spacing:-0.12px">000</span>
<span class="t s11" style="left:881.8px;top:773.89px;letter-spacing:-0.119px">32405</span>
<span class="t s11" style="left:945.6px;top:773.89px;letter-spacing:-0.12px">000</span>
<span class="t s11" style="left:981.7px;top:773.89px;letter-spacing:-0.013px">ABC s.r.o.</span>
<span class="t s11" style="left:1083px;top:773.89px;letter-spacing:-0.143px">ZLV2-1/2016</span>
<span class="t s11" style="left:1168.9px;top:773.89px;letter-spacing:-0.143px">ZLV2-1/2016</span>
<span class="t s11" style="left:1249.2px;top:773.89px;letter-spacing:-0.143px">ZLV2-1/2016</span>
<span class="t s11" style="left:1326px;top:773.89px;letter-spacing:-0.143px">ZLV2-1/2016</span>
<span class="t s11" style="left:217.2px;top:799.89px;letter-spacing:-0.431px">Ne</span>
<span class="t s11" style="left:250.8px;top:799.89px;letter-spacing:0.074px">31.12.2017</span>
<span class="t s11" style="left:321.2px;top:799.89px;letter-spacing:-0.149px">KZN-99/2017</span>
<span class="t s11" style="left:408.6px;top:799.89px;letter-spacing:-0.132px">Kurzová ztráta ZLV2-1/2016</span>
<span class="t s11" style="left:652.5px;top:799.89px;;transform:scaleX(0.8636);transform-origin:0 0">CZK</span>
<span class="t s11" style="right:981.81px;top:799.89px;letter-spacing:-0.11px">90,00</span>
<span class="t s11" style="left:742.5px;top:799.89px;;transform:scaleX(0.8636);transform-origin:0 0">CZK</span>
<span class="t s11" style="right:891.81px;top:799.89px;letter-spacing:-0.11px">90,00</span>
<span class="t s11" style="left:773.7px;top:799.89px;letter-spacing:-0.119px">56300</span>
<span class="t s11" style="left:837.6px;top:799.89px;letter-spacing:-0.12px">000</span>
<span class="t s11" style="left:881.8px;top:799.89px;letter-spacing:-0.119px">32405</span>
<span class="t s11" style="left:945.6px;top:799.89px;letter-spacing:-0.12px">000</span>
<span class="t s11" style="left:981.7px;top:799.89px;letter-spacing:-0.013px">ABC s.r.o.</span>
<span class="t s11" style="left:1083px;top:799.89px;letter-spacing:-0.143px">ZLV2-1/2016</span>
<span class="t s11" style="left:1168.9px;top:799.89px;letter-spacing:-0.143px">ZLV2-1/2016</span>
<span class="t s11" style="left:1249.2px;top:799.89px;letter-spacing:-0.143px">ZLV2-1/2016</span>
<span class="t s11" style="left:1326px;top:799.89px;letter-spacing:-0.143px">ZLV2-1/2016</span>
<span class="t s11" style="left:217.2px;top:825.89px;letter-spacing:-0.431px">Ne</span>
<span class="t s11" style="left:250.8px;top:825.89px;letter-spacing:0.074px">31.12.2018</span>
<span class="t s11" style="left:321.2px;top:825.89px;letter-spacing:-0.149px">KZN-43/2018</span>
<span class="t s11" style="left:408.6px;top:825.89px;letter-spacing:-0.132px">Kurzová ztráta ZLV2-1/2016</span>
<span class="t s11" style="left:652.5px;top:825.89px;;transform:scaleX(0.8636);transform-origin:0 0">CZK</span>
<span class="t s11" style="right:981.81px;top:825.89px;letter-spacing:-0.11px">20,00</span>
<span class="t s11" style="left:742.5px;top:825.89px;;transform:scaleX(0.8636);transform-origin:0 0">CZK</span>
<span class="t s11" style="right:891.81px;top:825.89px;letter-spacing:-0.11px">20,00</span>
<span class="t s11" style="left:773.7px;top:825.89px;letter-spacing:-0.119px">56300</span>
<span class="t s11" style="left:837.6px;top:825.89px;letter-spacing:-0.12px">000</span>
<span class="t s11" style="left:881.8px;top:825.89px;letter-spacing:-0.119px">32405</span>
<span class="t s11" style="left:945.6px;top:825.89px;letter-spacing:-0.12px">000</span>
<span class="t s11" style="left:981.7px;top:825.89px;letter-spacing:-0.013px">ABC s.r.o.</span>
<span class="t s11" style="left:1083px;top:825.89px;letter-spacing:-0.143px">ZLV2-1/2016</span>
<span class="t s11" style="left:1168.9px;top:825.89px;letter-spacing:-0.143px">ZLV2-1/2016</span>
<span class="t s11" style="left:1249.2px;top:825.89px;letter-spacing:-0.143px">ZLV2-1/2016</span>
<span class="t s11" style="left:1326px;top:825.89px;letter-spacing:-0.143px">ZLV2-1/2016</span>
<span class="t s11" style="left:217.2px;top:851.89px;letter-spacing:-0.431px">Ne</span>
<span class="t s11" style="left:250.8px;top:851.89px;letter-spacing:0.074px">31.12.2019</span>
<span class="t s11" style="left:321.2px;top:851.89px;letter-spacing:-0.149px">KZN-26/2019</span>
<span class="t s11" style="left:408.6px;top:851.89px;letter-spacing:-0.132px">Kurzová ztráta ZLV2-1/2016</span>
<span class="t s11" style="left:652.5px;top:851.89px;;transform:scaleX(0.8636);transform-origin:0 0">CZK</span>
<span class="t s11" style="right:981.81px;top:851.89px;letter-spacing:-0.11px">10,00</span>
<span class="t s11" style="left:742.5px;top:851.89px;;transform:scaleX(0.8636);transform-origin:0 0">CZK</span>
<span class="t s11" style="right:891.81px;top:851.89px;letter-spacing:-0.11px">10,00</span>
<span class="t s11" style="left:773.7px;top:851.89px;letter-spacing:-0.119px">56300</span>
<span class="t s11" style="left:837.6px;top:851.89px;letter-spacing:-0.12px">000</span>
<span class="t s11" style="left:881.8px;top:851.89px;letter-spacing:-0.119px">32405</span>
<span class="t s11" style="left:945.6px;top:851.89px;letter-spacing:-0.12px">000</span>
<span class="t s11" style="left:981.7px;top:851.89px;letter-spacing:-0.013px">ABC s.r.o.</span>
<span class="t s11" style="left:1083px;top:851.89px;letter-spacing:-0.143px">ZLV2-1/2016</span>
<span class="t s11" style="left:1168.9px;top:851.89px;letter-spacing:-0.143px">ZLV2-1/2016</span>
<span class="t s11" style="left:1249.2px;top:851.89px;letter-spacing:-0.143px">ZLV2-1/2016</span>
<span class="t s11" style="left:1326px;top:851.89px;letter-spacing:-0.143px">ZLV2-1/2016</span>
<span class="t s11" style="left:217.2px;top:877.89px;letter-spacing:-0.431px">Ne</span>
<span class="t s11" style="left:250.8px;top:877.89px;letter-spacing:0.074px">20.10.2019</span>
<span class="t s11" style="left:321.2px;top:877.89px;letter-spacing:-0.141px">FV-1/2019</span>
<span class="t s11" style="left:408.6px;top:877.89px;letter-spacing:-0.134px">Zúčtování zálohy ZLV2-18/2017</span>
<span class="t s11" style="left:652.5px;top:877.89px;;transform:scaleX(0.8178);transform-origin:0 0">USD</span>
<span class="t s11" style="right:981.81px;top:877.89px;letter-spacing:-0.11px">15,00</span>
<span class="t s11" style="left:742.5px;top:877.89px;;transform:scaleX(0.8636);transform-origin:0 0">CZK</span>
<span class="t s11" style="right:891.81px;top:877.89px;letter-spacing:-0.112px">450,00</span>
<span class="t s11" style="left:773.7px;top:877.89px;letter-spacing:-0.119px">32405</span>
<span class="t s11" style="left:837.6px;top:877.89px;letter-spacing:-0.12px">000</span>
<span class="t s11" style="left:881.8px;top:877.89px;letter-spacing:0.044px">31100</span>
<span class="t s11" style="left:945.6px;top:877.89px;letter-spacing:-0.12px">000</span>
<span class="t s11" style="left:981.7px;top:877.89px;letter-spacing:-0.115px">Kofr Karel - elektro</span>
<span class="t s11" style="left:1083px;top:877.89px;letter-spacing:-0.144px">ZLV2-17/2017</span>
<span class="t s11" style="left:1168.9px;top:877.89px;letter-spacing:-0.144px">ZLV2-17/2017</span>
<span class="t s11" style="left:1249.2px;top:877.89px;letter-spacing:-0.144px">ZLV2-17/2017</span>
<span class="t s11" style="left:1326px;top:877.89px;letter-spacing:-0.144px">ZLV2-17/2017</span>
<span class="t s11" style="left:217.2px;top:903.89px;letter-spacing:-0.431px">Ne</span>
<span class="t s11" style="left:250.8px;top:903.89px;letter-spacing:0.074px">20.10.2019</span>
<span class="t s11" style="left:321.2px;top:903.89px;letter-spacing:-0.141px">FV-1/2019</span>
<span class="t s11" style="left:408.6px;top:903.89px;letter-spacing:-0.134px">Zúčtování zálohy ZLV2-19/2017</span>
<span class="t s11" style="left:652.5px;top:903.89px;;transform:scaleX(0.8178);transform-origin:0 0">USD</span>
<span class="t s11" style="right:981.81px;top:903.89px;letter-spacing:-0.11px">15,00</span>
<span class="t s11" style="left:742.5px;top:903.89px;;transform:scaleX(0.8636);transform-origin:0 0">CZK</span>
<span class="t s11" style="right:891.81px;top:903.89px;letter-spacing:-0.112px">450,00</span>
<span class="t s11" style="left:773.7px;top:903.89px;letter-spacing:-0.119px">32405</span>
<span class="t s11" style="left:837.6px;top:903.89px;letter-spacing:-0.12px">000</span>
<span class="t s11" style="left:881.8px;top:903.89px;letter-spacing:0.044px">31100</span>
<span class="t s11" style="left:945.6px;top:903.89px;letter-spacing:-0.12px">000</span>
<span class="t s11" style="left:981.7px;top:903.89px;letter-spacing:-0.115px">Kofr Karel - elektro</span>
<span class="t s11" style="left:1083px;top:903.89px;letter-spacing:-0.144px">ZLV2-17/2017</span>
<span class="t s11" style="left:1168.9px;top:903.89px;letter-spacing:-0.144px">ZLV2-17/2017</span>
<span class="t s11" style="left:1249.2px;top:903.89px;letter-spacing:-0.144px">ZLV2-17/2017</span>
<span class="t s11" style="left:1326px;top:903.89px;letter-spacing:-0.144px">ZLV2-17/2017</span>
<svg style="left:1178px;top:276px" width="50" height="50"><circle cx="24.5" cy="24.4" r="19.2" fill="none" stroke="#ee4266" stroke-width="3.6"/><path d="M29.1 12V34.1H25V17.7Q22.6 19.9 19.7 21V17.1Q23.9 15.3 26.3 12Z" fill="#ee4266"/></svg>
<div style="left:1400px;top:421px;width:55px;height:504px;overflow:hidden" id="lc">
<span class="t s11" style="left:7.7px;top:11.89px;letter-spacing:-0.42px;color:#000">Skupina D</span>
<span class="t s11" style="left:8.6px;top:40.89px;letter-spacing:-0.1px">FV-4/2022</span>
<span class="t s11" style="left:8.6px;top:66.89px;letter-spacing:-0.1px">FV-4/2022</span>
<span class="t s11" style="left:8.6px;top:92.89px;letter-spacing:-0.1px">FV-4/2022</span>
<span class="t s11" style="left:8.6px;top:118.89px;letter-spacing:-0.1px">FV-4/2022</span>
<span class="t s11" style="left:8.6px;top:144.89px;letter-spacing:-0.1px">FV-4/2022</span>
<span class="t s11" style="left:8.6px;top:170.89px;letter-spacing:-0.1px">FV-4/2022</span>
<span class="t s11" style="left:8.6px;top:196.89px;letter-spacing:-0.1px">FV-2/2023</span>
<span class="t s11" style="left:8.6px;top:222.89px;letter-spacing:-0.1px">ZLV-1/2023</span>
<span class="t s11" style="left:8.6px;top:248.89px;letter-spacing:-0.1px">ZLV-1/2023</span>
<span class="t s11" style="left:8.6px;top:274.89px;letter-spacing:-0.1px">ZLV-1/2023</span>
<span class="t s11" style="left:8.6px;top:300.89px;letter-spacing:-0.1px">ZLV-1/2023</span>
<span class="t s11" style="left:8.6px;top:326.89px;letter-spacing:-0.1px">FV-2/2023</span>
<span class="t s11" style="left:8.6px;top:352.89px;letter-spacing:-0.1px">ZLV2-1/2016</span>
<span class="t s11" style="left:8.6px;top:378.89px;letter-spacing:-0.1px">ZLV2-1/2016</span>
<span class="t s11" style="left:8.6px;top:404.89px;letter-spacing:-0.1px">ZLV2-1/2016</span>
<span class="t s11" style="left:8.6px;top:430.89px;letter-spacing:-0.1px">ZLV2-1/2016</span>
<span class="t s11" style="left:8.6px;top:456.89px;letter-spacing:-0.1px">ZLV2-17/2017</span>
<span class="t s11" style="left:8.6px;top:482.89px;letter-spacing:-0.1px">ZLV2-17/2017</span>
</div>
<svg style="left:1030px;top:510px" width="50" height="48"><ellipse cx="24.5" cy="23.4" rx="19.9" ry="17.9" fill="none" stroke="#ee4266" stroke-width="3.6"/></svg>
<span class="t b" style="left:1046px;top:512.7px;font-size:30.5px;line-height:36px;color:#ee4266;transform:scaleX(0.95);transform-origin:0 0">2</span>
</div></body></html>
